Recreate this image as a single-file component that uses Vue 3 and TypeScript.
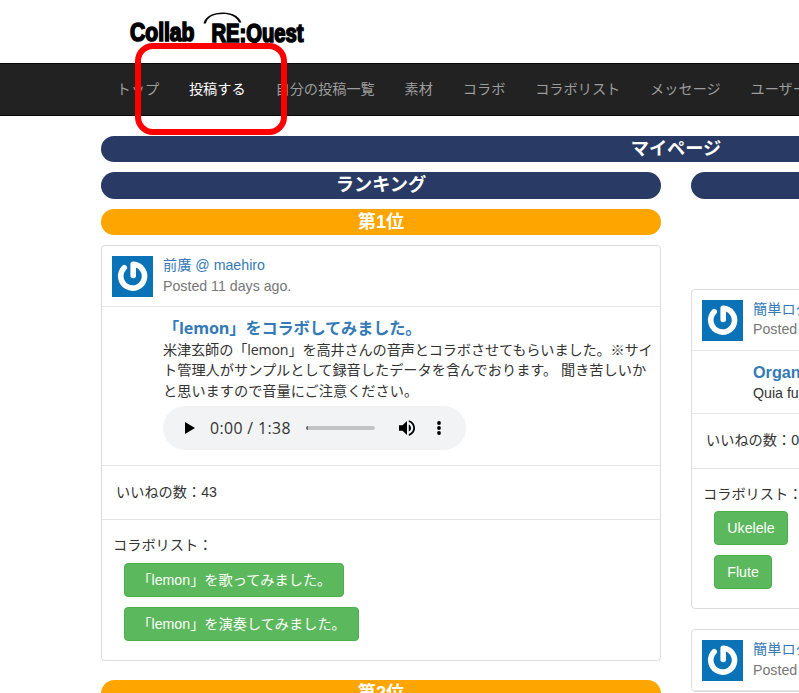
<script setup lang="ts">
interface NavItem { label: string; active?: boolean }
interface Post {
  id: number
  author: string
  posted: string
  title: string
  latinTitle?: boolean
  body: string[]
  audio?: boolean
  likes: number
  collabs: string[]
}

const nav: NavItem[] = [
  { label: 'トップ' },
  { label: '投稿する', active: true },
  { label: '自分の投稿一覧' },
  { label: '素材' },
  { label: 'コラボ' },
  { label: 'コラボリスト' },
  { label: 'メッセージ' },
  { label: 'ユーザー' },
]

const ranking: Post[] = [
  {
    id: 1,
    author: '前廣 @ maehiro',
    posted: 'Posted 11 days ago.',
    title: '「lemon」をコラボしてみました。',
    body: [
      '米津玄師の「lemon」を高井さんの音声とコラボさせてもらいました。※サイ',
      'ト管理人がサンプルとして録音したデータを含んでおります。 聞き苦しいか',
      'と思いますので音量にご注意ください。',
    ],
    audio: true,
    likes: 43,
    collabs: ['「lemon」を歌ってみました。', '「lemon」を演奏してみました。'],
  },
]

const timeline: Post[] = [
  {
    id: 2,
    author: '簡単ログイン',
    posted: 'Posted 11 days ago.',
    title: 'Organ',
    latinTitle: true,
    body: ['Quia fu'],
    likes: 0,
    collabs: ['Ukelele', 'Flute'],
  },
  {
    id: 3,
    author: '簡単ログイン',
    posted: 'Posted 11 days ago.',
    title: '',
    body: [],
    likes: 0,
    collabs: [],
  },
]

const columns = [
  { key: 'ranking', heading: 'ランキング', rank: '第1位', next: '第2位', posts: ranking },
  { key: 'timeline', heading: '', rank: '', next: '', posts: timeline },
]
</script>

<template>
  <div class="page">
    <header class="brand">
      <svg class="logo" width="190" height="50" viewBox="0 0 190 50">
        <g class="logo-text">
          <text x="5" y="41" textLength="64.500" lengthAdjust="spacingAndGlyphs">Collab</text>
          <text x="86.500" y="42" textLength="92" lengthAdjust="spacingAndGlyphs">RE:Quest</text>
        </g>
        <path d="M78.500 23.500C80 16 89 12.400 98 12.500C107 12.600 114 16 116.500 22.500L114 22.500C111 16.300 105 14 98 14C89 14 82 17 81 23.500Z" />
      </svg>
    </header>

    <nav class="navbar">
      <a v-for="item in nav" :key="item.label" :class="{ active: item.active }">{{ item.label }}</a>
    </nav>
    <div class="highlight"></div>

    <main class="content">
      <h2 class="pill">マイページ</h2>
      <div class="columns">
        <section v-for="col in columns" :key="col.key" :class="col.key">
          <h2 class="pill">{{ col.heading }}</h2>
          <h2 v-if="col.rank" class="pill orange">{{ col.rank }}</h2>

          <article v-for="post in col.posts" :key="post.id" class="card">
            <div class="head">
              <svg class="avatar" width="41" height="41" viewBox="0 0 41 41">
                <rect width="41" height="41" fill="#0a73b8" />
                <path d="M12.200 11.800A11.900 11.900 0 1 0 21.200 8.300V19.500" fill="none" stroke="#fff" stroke-width="5.600" stroke-linecap="round" stroke-linejoin="round" />
              </svg>
              <div class="meta">
                <a>{{ post.author }}</a>
                <span>{{ post.posted }}</span>
              </div>
            </div>

            <template v-if="post.title">
              <div class="body">
                <h3 :class="{ latin: post.latinTitle }">{{ post.title }}</h3>
                <p v-for="line in post.body" :key="line" :class="{ latin: post.latinTitle }">{{ line }}</p>
                <div v-if="post.audio" class="audio">
                  <svg class="play" width="12" height="12" viewBox="0 0 12 12"><path d="M1 0L11 6L1 12Z" /></svg>
                  <span class="time">0:00 / 1:38</span>
                  <span class="track"></span>
                  <svg class="volume" width="16" height="16" viewBox="3 3 18 18"><path d="M3 9v6h4l5 5V4L7 9H3zm13.500 3c0-1.770-1.020-3.290-2.500-4.030v8.050c1.480-.730 2.500-2.250 2.500-4.020zM14 3.230v2.060c2.890.860 5 3.540 5 6.710s-2.110 5.850-5 6.710v2.060c4.010-.910 7-4.490 7-8.770s-2.990-7.860-7-8.770z" /></svg>
                  <svg class="more" width="4" height="14" viewBox="0 0 4 14"><circle cx="2" cy="2" r="1.900" /><circle cx="2" cy="7" r="1.900" /><circle cx="2" cy="12" r="1.900" /></svg>
                </div>
              </div>
              <div class="likes">いいねの数：{{ post.likes }}</div>
              <div class="collabs">
                <span>コラボリスト：</span>
                <button v-for="c in post.collabs" :key="c">{{ c }}</button>
              </div>
            </template>
          </article>

          <h2 v-if="col.next" class="pill orange">{{ col.next }}</h2>
        </section>
      </div>
    </main>
  </div>
</template>

<style>
body { margin: 0; background: #fff; }
</style>

<style scoped>
* { box-sizing: border-box; }
.page {
  position: relative;
  width: 799px;
  height: 693px;
  overflow: hidden;
  color: #333;
  font: 14.2px/20.3px "Liberation Sans", "Noto Sans CJK JP", sans-serif;
}
.brand { height: 63px; padding-left: 125px; }
.logo { display: block; }
.logo-text {
  font: bold 25.500px "Liberation Sans", sans-serif;
  fill: #000;
  stroke: #000;
  stroke-width: 1.700px;
}
.navbar {
  display: flex;
  align-items: center;
  gap: 29.800px;
  height: 52.500px;
  padding: 0 0 1px 116.500px;
  background: #222;
  border-top: 1px solid #080808;
  border-bottom: 1px solid #080808;
  white-space: nowrap;
}
.navbar a { flex: none; color: #9d9d9d; }
.navbar .active { color: #fff; }
.highlight {
  position: absolute;
  left: 135px;
  top: 43px;
  width: 152px;
  height: 92px;
  border: 6px solid #f00;
  border-radius: 18px;
}
.content { width: 1150px; margin-left: 101px; padding-top: 20.300px; }
.pill {
  height: 26.400px;
  margin: 0 0 10px;
  border-radius: 14px;
  background: #293b64;
  color: #fff;
  text-align: center;
  font-size: 18.200px;
  line-height: 26px;
  font-weight: bold;
}
.pill.orange { background: #ffa500; }
.columns { display: flex; gap: 30px; }
.columns section { width: 560px; flex: none; }
.card {
  margin-bottom: 20px;
  border: 1px solid #ddd;
  border-radius: 4px;
}
.ranking .card { margin-bottom: 19.500px; }
.timeline .card:first-of-type { margin-top: 90px; }
.head { display: flex; height: 61px; padding: 10px; gap: 10px; border-bottom: 1px solid #e5e5e5; }
.avatar { flex: none; }
.meta { display: flex; flex-direction: column; gap: 0.500px; margin-top: -1px; white-space: nowrap; }
.meta a { color: #337ab7; }
.meta span { color: #777; }
.body { padding: 11px 0 15px 61px; border-bottom: 1px solid #e5e5e5; white-space: nowrap; }
.timeline .body { padding-bottom: 10.500px; }
.timeline h3 { height: 21px; }
h3 {
  margin: 0;
  height: 22px;
  color: #337ab7;
  font: bold 16.200px/21px "Open Sans", "Noto Sans CJK JP", sans-serif;
  letter-spacing: -0.150px;
}
p { margin: 0; font-family: "Open Sans", "Noto Sans CJK JP", sans-serif; }
p:nth-of-type(1):not(.latin) { letter-spacing: -0.150px; }
h3.latin, p.latin { font-family: "Liberation Sans", sans-serif; letter-spacing: 0; }
.audio {
  display: flex;
  align-items: center;
  width: 302.500px;
  height: 44px;
  margin-top: 5px;
  padding-left: 21px;
  border-radius: 22px;
  background: #f1f3f4;
}
.time { width: 82px; margin-left: 14px; font: 15.800px/20px "Open Sans", sans-serif; letter-spacing: 0.400px; }
.track { width: 69px; height: 4px; margin-left: 14px; border-left: 2px solid #666; border-radius: 2px; background: #c1c3c4; }
.volume { margin-left: 24px; }
.more { margin-left: 22px; }
.likes { height: 54.500px; padding: 16px 14px; border-bottom: 1px solid #e5e5e5; white-space: nowrap; }
.collabs { display: flex; flex-direction: column; align-items: flex-start; height: 139.500px; padding: 15px 11px; }
.collabs span { margin-bottom: 1px; white-space: nowrap; }
button {
  height: 34.500px;
  margin: 6px 0 4px 11.300px;
  padding: 0 12px;
  border: 1px solid #4cae4c;
  border-radius: 4px;
  background: #5cb85c;
  color: #fff;
  font: inherit;
  white-space: nowrap;
}
</style>
